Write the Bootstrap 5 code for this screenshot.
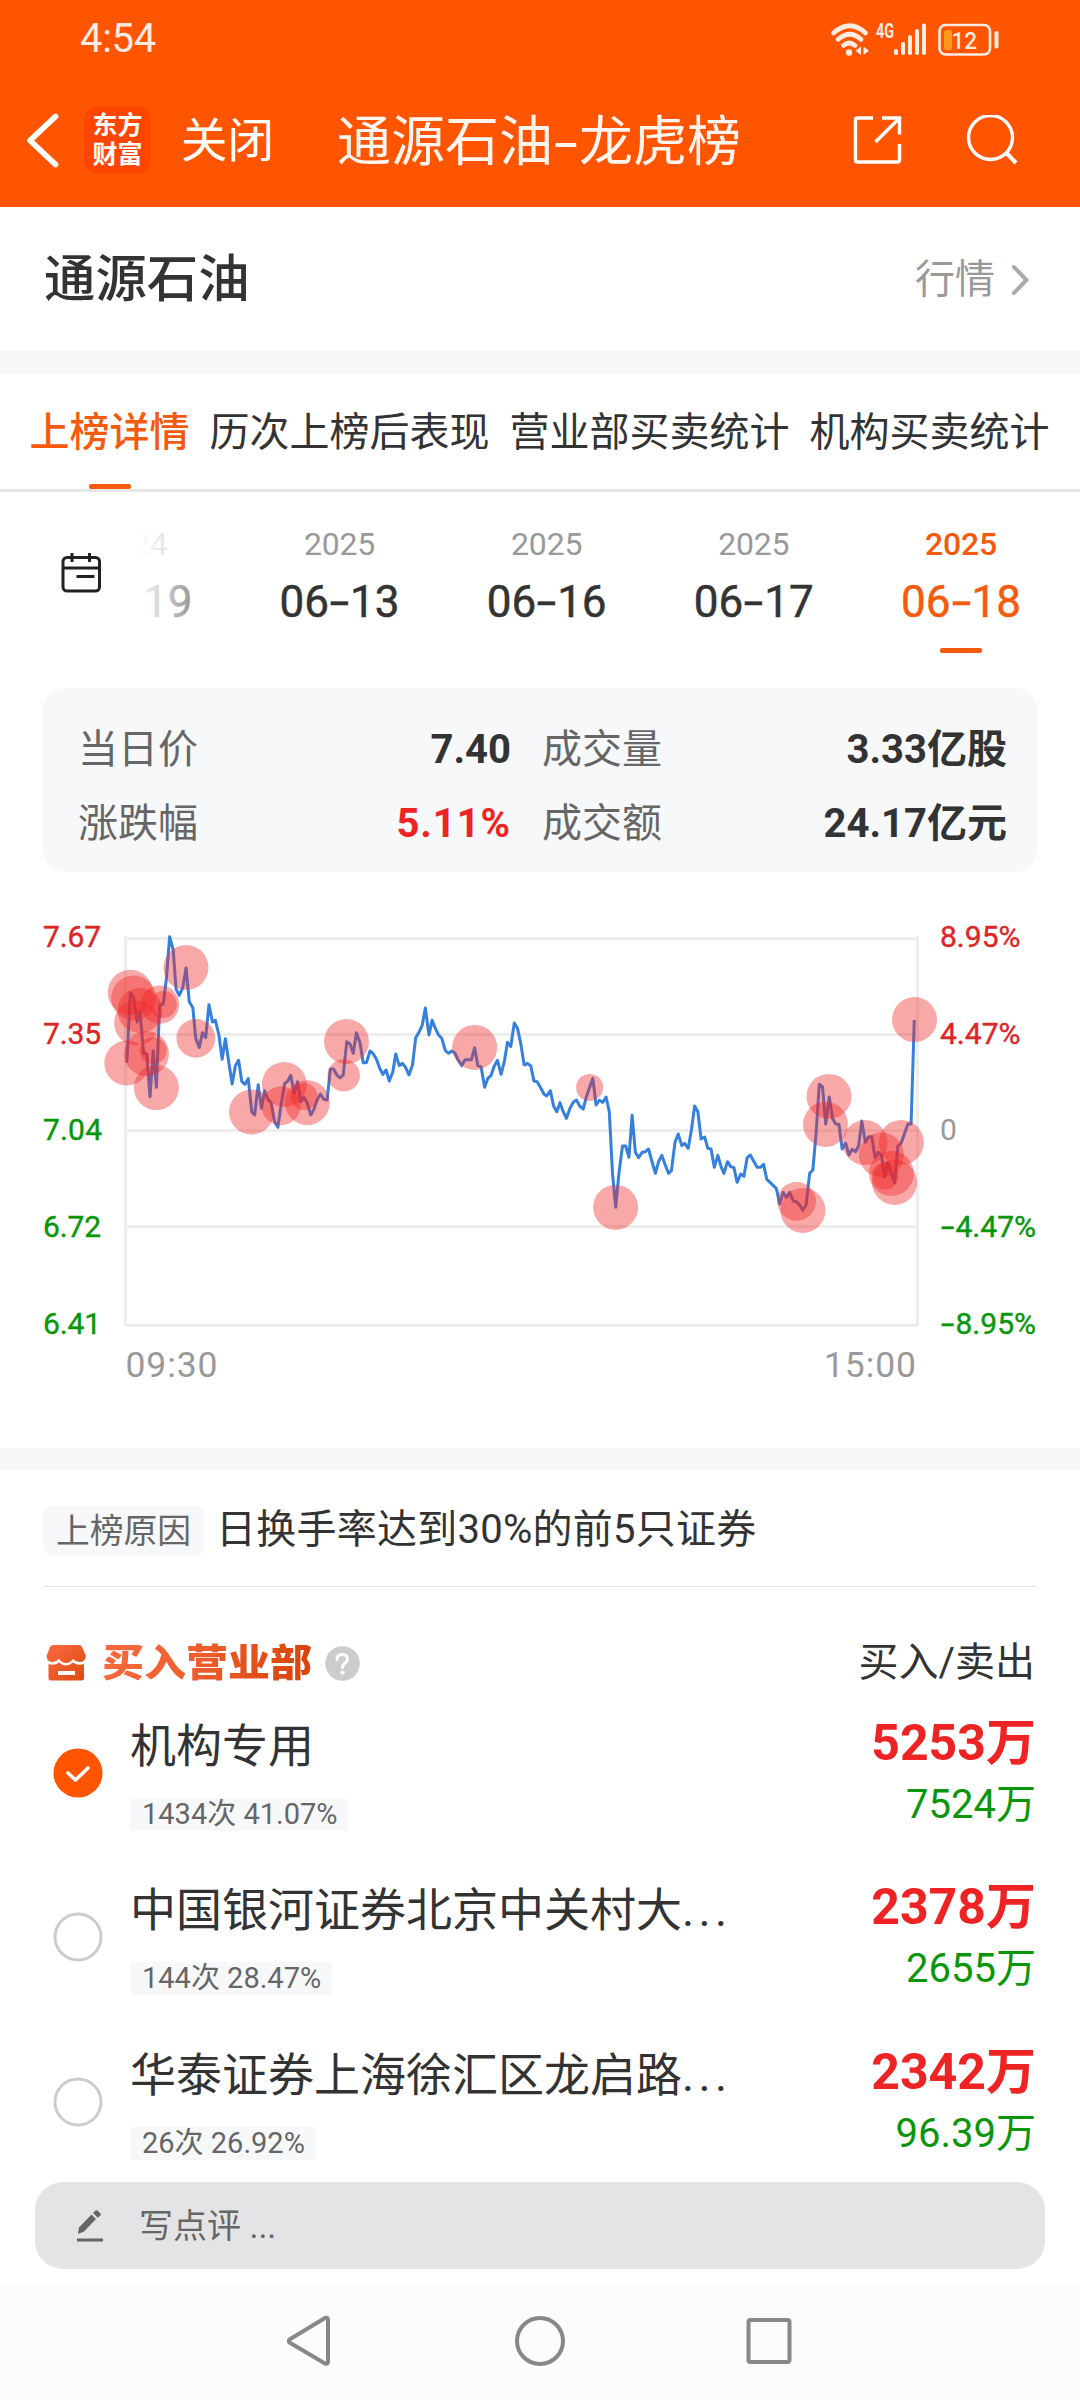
<!DOCTYPE html>
<html lang="zh-CN">
<head>
<meta charset="utf-8">
<meta name="viewport" content="width=device-width, initial-scale=1">
<title>通源石油-龙虎榜</title>
<link href="https://cdn.jsdelivr.net/npm/bootstrap@5.3.0/dist/css/bootstrap.min.css" rel="stylesheet">
<style>
body{font-family:Roboto,"Noto Sans CJK SC",sans-serif;color:#333;background:#fff;width:1080px;height:2400px;overflow:hidden;line-height:1;font-size:40px}
svg{display:block;flex:none}
.topbar{background:#ff5500;height:207px}
.status{height:76px;padding:1px 80px 0 80px;color:#ffebe1}
.status .clock{font-size:40px;letter-spacing:-.3px}
.titlebar{height:131px;padding:0 62px 4px 26px;color:#fff}
.applogo{width:67px;height:68px;border-radius:15px;background:#ff4600;font-size:25px;font-weight:700;line-height:29px;margin-left:25px}
.closer{font-size:46.5px;margin-left:30px;padding-top:3px}
.pagename{font-size:54px;margin-left:63px;padding-top:7px;color:#fff5f0;white-space:nowrap}
.hy{font-style:normal;display:inline-block;transform:scaleX(1.6);width:21px;text-align:center}
.pagename .hy{width:26px}
.stock{height:144px;padding:2px 50px 0 44px}
.stock h1{font-size:51.4px;font-weight:500;margin:0}
.muted9{color:#999}
.strip{height:23px;background:#f7f8fa}
.tabs{height:118px;padding:0 29.5px;gap:20px;border-bottom:3px solid #e6e6e6}
.tabs a{color:#333;text-decoration:none;white-space:nowrap;position:relative;height:115px;line-height:117px}
.tabs a.on{color:#f65a0c;font-weight:500}
.tabs a.on::after,.dt.on::after{content:"";position:absolute;left:50%;margin-left:-21px;width:42px;height:5px;border-radius:2px;background:#f65a0c;bottom:0}
.dates{height:196px}
.cal{width:120px;padding-left:61px;padding-top:60px}
.strip-dates{width:960px;padding-right:15.4px;position:relative}
.strip-dates::before{content:"";position:absolute;left:0;top:0;width:124px;height:150px;background:linear-gradient(90deg,#fff 18px,rgba(255,255,255,0));z-index:2}
.dt{flex:none;width:207.2px;height:161px;text-align:center;position:relative;padding-top:36px}
.dt.past{width:115.800px;text-align:left;padding-left:12px}
.dt.past b{padding-left:11px}
.dt small{display:block;font-size:32px;line-height:32px;color:#999;letter-spacing:-.2px}
.dt b{display:block;font-weight:400;font-size:44px;line-height:44px;margin-top:20px;-webkit-text-stroke:.5px}
.dt.on,.dt.on small{color:#f65a0c}
.dt.on small{font-weight:500}
.facts{margin:0 43px;height:184px;border-radius:22px;background:#f7f8fa;padding:25px 30px 0 35px}
.facts .line{height:74px}
.facts .k{color:#666;width:125px}
.facts .v{font-weight:700;text-align:right}
.facts .v1{width:308px;margin-right:31px}
.facts .wide{letter-spacing:.9px}
.up{color:#ee2424}.down{color:#0a960a}
.reason{height:115px;padding:3px 43px 0}
.rtag{background:#f7f8fa;border-radius:10px;width:161px;height:51px;font-size:33.8px;color:#666;margin-right:12px;padding-top:2px;margin-top:1px}
.rtext{letter-spacing:.25px}
.rule1{height:1px;background:#e3e3e3;margin:0 43px}
.buyhead{height:136px;padding:16px 45px 0 46px}
.buytitle{font-size:42px;font-weight:900;transform:scaleY(.9);background:linear-gradient(100deg,#f8693f,#f0602f 40%,#d64209);-webkit-background-clip:text;color:transparent;margin-left:15px;line-height:50px}
.seat{height:164.3px;padding:0 44px 0 53px}
.seat>svg{margin-top:25px}
.who{width:600px;margin-left:27px}
.who .nm{font-size:46px;line-height:46px;white-space:nowrap}
.nm .dots{letter-spacing:4.4px}
.cnt{display:inline-block;background:#f7f8fa;border-radius:4px;height:33px;line-height:33px;font-size:29px;color:#666;padding:0 11px 0 12px;margin-top:29px;white-space:nowrap}
.amt{text-align:right;white-space:nowrap;margin-top:-5px}
.amt .b{font-size:50px;line-height:50px;font-weight:700}
.amt .s{font-size:40px;line-height:40px;margin-top:17px}
.rows{height:459px;overflow:hidden}
.rows{margin-top:0;padding-top:0;overflow:visible}
.comment{margin:0 35px;height:87px;border-radius:28px;background:#e4e4e6;color:#666;font-size:34px;padding-left:42px}
.comment span{margin-left:36px}
.sysnav{height:118px;background:#fcfcfc;margin-top:13px;padding-left:287px}
</style>
</head>
<body>
<header class="topbar">
  <div class="status d-flex align-items-center">
    <span class="clock">4:54</span>
    <svg class="ms-auto" width="170" height="40" viewBox="830 16 170 40" fill="none" stroke="#ffebe1">
      <g stroke-width="4.6" stroke-linecap="round"><path d="M833.5 30Q850 15.5 865.500 30M838 36.500Q850 26 861 36.500M843.500 42.500Q849 37.500 855 42.500"/></g>
      <g fill="#ffebe1" stroke="none"><circle cx="849" cy="49.500" r="3.200"/><path d="M861 43.500v8.500l-5.500-4.200zM863.500 43.500v8.500l5.500-4.200z"/>
      <text x="876" y="35" font-size="19.500" font-family="Roboto" font-weight="700" textLength="18" lengthAdjust="spacingAndGlyphs">4G</text>
      <rect x="894" y="46" width="4" height="6" rx="1.500"/><rect x="901" y="39" width="4" height="13" rx="1.800"/><rect x="908" y="32" width="4" height="20" rx="1.800"/><rect x="915" y="26" width="4" height="26" rx="1.800"/><rect x="922" y="20.500" width="4" height="31.500" rx="1.800"/>
      <rect x="994.500" y="28" width="4" height="17.500" rx="1.800"/>
      <text x="951.500" y="46" font-size="24" font-family="Roboto" textLength="25.500" font-weight="500" lengthAdjust="spacingAndGlyphs">12</text></g>
      <rect x="939.500" y="22" width="50.500" height="29.500" rx="6" stroke-width="2.600"/>
      <rect x="944" y="27" width="8" height="20" rx="2.500" fill="#ff9a1a" stroke="none"/>
    </svg>
  </div>
  <div class="titlebar d-flex align-items-center">
    <svg width="33" height="58" viewBox="26 110 33 58" fill="none" stroke="#fff" stroke-width="5.800" stroke-linecap="round" stroke-linejoin="round"><path d="M55.500 115.500L30 139.500 55.500 163.500"/></svg>
    <div class="applogo d-flex flex-column align-items-center justify-content-center"><span>东方</span><span>财富</span></div>
    <span class="closer">关闭</span>
    <span class="pagename">通源石油<i class="hy">-</i>龙虎榜</span>
    <svg class="ms-auto" width="165" height="50" viewBox="854 115 165 50" fill="none" stroke="#fff" stroke-width="3.400">
      <path d="M874 118H858.500Q856.500 118 856.500 120V160Q856.500 162 858.500 162H898.500Q900.500 162 900.500 160V144M883 118H900.500V134.500M899 119.500L876.500 142"/>
      <circle cx="991.500" cy="137.500" r="22"/><path d="M1006.500 152L1017 163" stroke-width="4"/>
    </svg>
  </div>
</header>
<section class="stock d-flex align-items-center justify-content-between">
  <h1>通源石油</h1>
  <span class="muted9 d-flex align-items-center">行情<svg class="ms-3" width="19" height="34" viewBox="0 0 19 34" fill="none" stroke="#aaa" stroke-width="4" stroke-linecap="round" stroke-linejoin="round"><path d="M3 4L15.500 17 3 30"/></svg></span>
</section>
<div class="strip"></div>
<nav class="tabs d-flex"><a class="on">上榜详情</a><a>历次上榜后表现</a><a>营业部买卖统计</a><a>机构买卖统计</a></nav>
<section class="dates d-flex">
  <div class="cal"><svg width="40" height="42" viewBox="61 552 40 42" fill="none" stroke="#222" stroke-width="3"><rect x="63" y="557.500" width="36.500" height="33.500" rx="4"/><path d="M63 568H99.500M72 553V562M89.500 553V562M76.500 576.500H94.500"/></svg></div>
  <div class="strip-dates d-flex justify-content-end">
    <div class="dt past"><small>24</small><b>19</b></div>
    <div class="dt"><small>2025</small><b>06<i class="hy">-</i>13</b></div>
    <div class="dt"><small>2025</small><b>06<i class="hy">-</i>16</b></div>
    <div class="dt"><small>2025</small><b>06<i class="hy">-</i>17</b></div>
    <div class="dt on"><small>2025</small><b>06<i class="hy">-</i>18</b></div>
  </div>
</section>
<section class="facts">
  <div class="line d-flex align-items-center"><span class="k">当日价</span><span class="v v1">7.40</span><span class="k">成交量</span><span class="v flex-fill">3.33亿股</span></div>
  <div class="line d-flex align-items-center"><span class="k">涨跌幅</span><span class="v v1 up wide">5.11%</span><span class="k">成交额</span><span class="v flex-fill">24.17亿元</span></div>
</section>
<svg width="1080" height="576" viewBox="0 872 1080 576" font-family="Roboto" font-size="30">
  <path d="M125.500 938.500H917.500M125.500 1034.500H917.500M125.500 1130.500H917.500M125.500 1226.500H917.500M125.500 1325.500H917.500M125.500 936V1325.500M917.500 936V1325.500" stroke="#ededed" stroke-width="3" fill="none"/>
  <g transform="translate(0 900) scale(.357143 .333333)" fill="none" stroke="#3580dc" stroke-width="3" stroke-linejoin="round">
    <polyline vector-effect="non-scaling-stroke" points="355,488 365,278 374,293 384,366 392,333 402,460 411,462 420,590 429,453 438,562 447,315 457,313 466,235 475,110 485,150 493,268 502,286 512,262 521,204 530,305 540,323 548,415 558,442 567,398 576,413 585,314 595,366 603,361 613,405 622,478 631,416 641,490 650,552 659,497 668,481 677,544 686,553 695,536 705,636 713,645 723,554 732,625 741,572 750,598 759,608 769,665 778,682 787,615 797,551 806,543 814,526 824,580 833,545 842,605 851,592 860,608 870,645 879,628 888,600 897,582 907,598 916,600 925,507 934,507 943,525 952,534 961,525 971,425 980,432 989,460 998,398 1008,428 1017,488 1026,488 1036,453 1045,461 1054,478 1063,505 1072,523 1081,510 1090,543 1100,515 1108,462 1118,497 1127,490 1136,503 1145,525 1155,495 1164,413 1173,397 1182,377 1191,324 1201,405 1210,361 1219,385 1228,405 1237,415 1247,452 1256,460 1265,453 1274,460 1283,480 1293,497 1302,479 1320,479 1329,443 1338,497 1347,500 1357,562 1366,535 1375,526 1384,498 1393,481 1403,523 1412,485 1421,427 1430,440 1440,369 1449,385 1458,430 1468,497"/>
    <polyline transform="translate(1456 0)" vector-effect="non-scaling-stroke" points="12,497 20,490 30,497 39,543 48,545 57,562 67,582 75,588 85,572 94,618 103,635 112,608 121,635 130,655 140,625 149,607 158,600 167,618 177,627 186,590 195,562 204,535 213,615 222,601 232,607 241,591 250,635 259,820 268,922 277,820 287,738 296,738 305,772 314,646 323,757 332,773 342,757 351,755 360,747 369,783 379,820 388,785 397,766 406,793 416,820 424,812 434,727 443,702 453,737 461,730 471,745 480,690 489,618 498,635 507,717 517,711 526,745 535,747 544,802 554,766 563,800 571,820 581,785 590,800 599,803 608,847 618,822 627,829 636,773 645,765 654,783 664,802 673,802 682,793 691,838 700,847 718,866 727,912 737,877 746,892 755,877 765,903 774,905 783,915 792,931 801,915 811,820 820,810 829,700 838,553 847,560 856,672 866,591 875,655 884,672 893,673 902,747 912,730 921,765 930,748 940,755 948,738 957,663 967,727 976,710 985,710 994,772 1003,757 1012,765 1021,830 1030,787 1040,820 1049,848 1058,738 1067,730 1077,700 1086,672 1095,672 1104,360"/>
  </g>
  <g fill="#f12525" fill-opacity=".4">
    <circle cx="130.300" cy="992.300" r="22.500"/><circle cx="133.600" cy="998" r="22.500"/><circle cx="140" cy="1010.500" r="22.500"/><circle cx="136.600" cy="1023" r="22.500"/><circle cx="126.800" cy="1063" r="22.500"/><circle cx="146.500" cy="1053.600" r="22.500"/><circle cx="153.200" cy="1050.500" r="13.500"/><circle cx="156.400" cy="1087.600" r="22.500"/><circle cx="160" cy="1004.600" r="19.200"/><circle cx="163.200" cy="1004.600" r="13.500"/><circle cx="186" cy="967.500" r="22.500"/><circle cx="195.800" cy="1038.300" r="19.400"/>
    <circle cx="251.500" cy="1112" r="22.500"/><circle cx="284.300" cy="1084.500" r="22.500"/><circle cx="281" cy="1105.800" r="19.400"/><circle cx="304" cy="1096.600" r="13.500"/><circle cx="307.300" cy="1102.700" r="22.500"/><circle cx="346.500" cy="1041.500" r="22.500"/><circle cx="343.700" cy="1075.400" r="16.200"/><circle cx="474.700" cy="1047.400" r="22.500"/>
    <circle cx="589.600" cy="1087.400" r="13.500"/><circle cx="615.600" cy="1207.400" r="22.500"/><circle cx="796.600" cy="1201.300" r="19.400"/><circle cx="802.900" cy="1210.400" r="22.500"/><circle cx="829" cy="1096.400" r="22.500"/><circle cx="825.500" cy="1124.400" r="22.500"/><circle cx="865" cy="1142.600" r="22.500"/><circle cx="881.400" cy="1154.800" r="22.500"/><circle cx="901.400" cy="1142.400" r="22.500"/><circle cx="891.400" cy="1173.400" r="22.500"/><circle cx="894.600" cy="1182.400" r="22.500"/><circle cx="885" cy="1176" r="13.500"/><circle cx="914.500" cy="1019.600" r="22.500"/>
  </g>
  <g fill="#dc2626" stroke="#dc2626" stroke-width=".4"><text x="43" y="946.500" textLength="58">7.67</text><text x="43" y="1044" textLength="58">7.35</text><text x="940" y="946.500">8.95%</text><text x="940" y="1044">4.47%</text></g>
  <g fill="#0a960a" stroke="#0a960a" stroke-width=".4"><text x="43" y="1139.500" textLength="59">7.04</text><text x="43" y="1236.500" textLength="58">6.72</text><text x="43" y="1333.500" textLength="58">6.41</text>
    <text transform="translate(941 1236.500) scale(1.600 1)">-</text><text x="955.500" y="1236.500">4.47%</text><text transform="translate(941 1333.500) scale(1.600 1)">-</text><text x="955.500" y="1333.500">8.95%</text></g>
  <text x="940" y="1139.500" fill="#999">0</text>
  <g fill="#999" font-size="35.500"><text x="125.500" y="1377" textLength="92">09:30</text><text x="824" y="1377" textLength="92">15:00</text></g>
</svg>
<div class="strip"></div>
<section class="reason d-flex align-items-center">
  <span class="rtag d-flex align-items-center justify-content-center">上榜原因</span><span class="rtext">日换手率达到30%的前5只证券</span>
</section>
<div class="rule1"></div>
<section class="buyhead d-flex align-items-center">
  <svg width="41" height="36" viewBox="46 1644 41 36"><defs><linearGradient id="g" x1="0" y1="0" x2="1" y2="1"><stop offset="0" stop-color="#fb6a42"/><stop offset="1" stop-color="#dd4a10"/></linearGradient></defs>
    <path fill="url(#g)" d="M53 1644H79Q81 1644 82 1646L86 1655Q85 1661 79.500 1661 76 1661 73 1658 70 1662 66 1662 62 1662 59 1658 56 1661 52.500 1661 47 1661 46.500 1655L50 1646Q51 1644 53 1644ZM48.500 1663Q55 1665 59 1661.500 66 1667.500 73 1661.500 78 1665 84 1663V1677Q84 1679.500 81.500 1679.500H51Q48.500 1679.500 48.500 1677ZM58 1670V1674H75V1670Z" fill-rule="evenodd"/></svg>
  <span class="buytitle">买入营业部</span>
  <svg style="margin-left:13px" width="35" height="35" viewBox="0 0 35 35"><circle cx="17.500" cy="17.500" r="17.300" fill="#ccc"/><path d="M12 13.500Q12 8.500 17.300 8.500 22.500 8.500 22.500 13 22.500 15.500 19.500 17.500 17.500 19 17.500 21.500" fill="none" stroke="#fff" stroke-width="3" stroke-linecap="round"/><circle cx="17.500" cy="26.500" r="2.100" fill="#fff"/></svg>
  <span class="ms-auto">买入/卖出</span>
</section>
<main class="rows">
  <div class="seat d-flex">
    <svg width="50" height="54" viewBox="0 0 50 54"><circle cx="25" cy="25" r="24.500" fill="#ff5500"/><path d="M15 25L22.500 32 35 20" fill="none" stroke="#fff" stroke-width="3.600" stroke-linecap="round" stroke-linejoin="round"/></svg>
    <div class="who"><div class="nm">机构专用</div><span class="cnt">1434次 41.07%</span></div>
    <div class="amt ms-auto"><div class="b up">5253万</div><div class="s down">7524万</div></div>
  </div>
  <div class="seat d-flex">
    <svg width="50" height="54" viewBox="0 0 50 54"><circle cx="25" cy="25" r="23" fill="none" stroke="#ccc" stroke-width="3"/></svg>
    <div class="who"><div class="nm">中国银河证券北京中关村大<span class="dots">...</span></div><span class="cnt">144次 28.47%</span></div>
    <div class="amt ms-auto"><div class="b up">2378万</div><div class="s down">2655万</div></div>
  </div>
  <div class="seat d-flex">
    <svg width="50" height="54" viewBox="0 0 50 54"><circle cx="25" cy="25" r="23" fill="none" stroke="#ccc" stroke-width="3"/></svg>
    <div class="who"><div class="nm">华泰证券上海徐汇区龙启路<span class="dots">...</span></div><span class="cnt">26次 26.92%</span></div>
    <div class="amt ms-auto"><div class="b up">2342万</div><div class="s down">96.39万</div></div>
  </div>
</main>
<div class="comment d-flex align-items-center">
  <svg width="26" height="32" viewBox="0 0 26 32" fill="#666"><path d="M0 28.500H26V31.500H0ZM1 24L2 17.500 14.500 4.500 19 9 7 21.500ZM16 3L18.500 .5Q19.500 0 20.500 .5L23.500 3.500Q24 4.500 23.500 5.500L20.700 7.800Z"/></svg>
  <span>写点评 ...</span>
</div>
<footer class="sysnav d-flex align-items-center">
  <svg width="506" height="52" viewBox="287 2315 506 52" fill="none" stroke="#888" stroke-width="4"><path d="M289.500 2339.500L325 2318Q328 2317 328 2320V2361.500Q328 2364.500 325 2363.500L289.500 2342.500Q288 2341 289.500 2339.500Z" stroke-linejoin="round"/><circle cx="540" cy="2341" r="23"/><rect x="748.500" y="2320" width="41" height="42" rx="2"/></svg>
</footer>
</body>
</html>
